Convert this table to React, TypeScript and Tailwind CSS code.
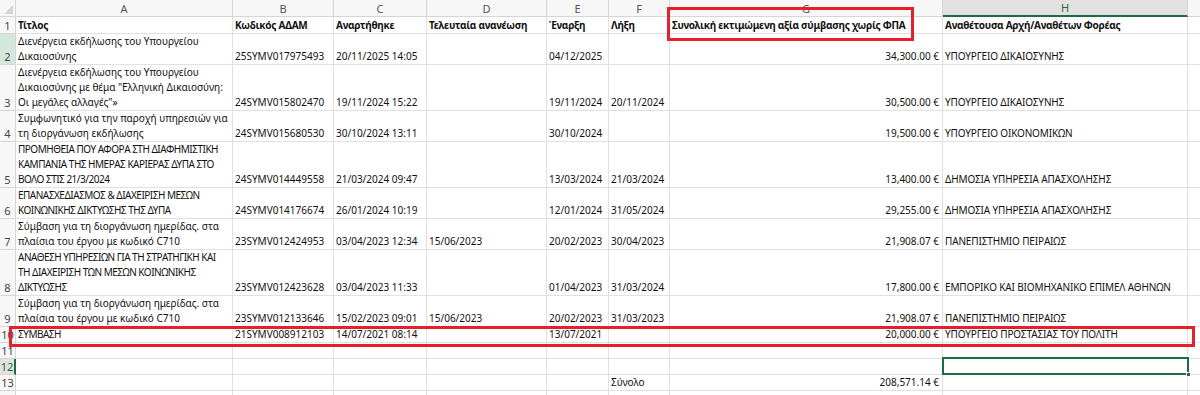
import React from "react";

type Row = {
  n: number;
  h: string;
  a?: string[];
  b?: string;
  c?: string;
  d?: string;
  e?: string;
  f?: string;
  g?: string;
  hh?: string;
  bold?: boolean;
};

const rows: Row[] = [
  { n: 1, h: "h-[17px]", a: ["Τίτλος"], b: "Κωδικός ΑΔΑΜ", c: "Αναρτήθηκε", d: "Τελευταία ανανέωση", e: "Έναρξη", f: "Λήξη", g: "Συνολική εκτιμώμενη αξία σύμβασης χωρίς ΦΠΑ", hh: "Αναθέτουσα Αρχή/Αναθέτων Φορέας", bold: true },
  { n: 2, h: "h-[31px]", a: ["Διενέργεια εκδήλωσης του Υπουργείου", "Δικαιοσύνης"], b: "25SYMV017975493", c: "20/11/2025 14:05", e: "04/12/2025", g: "34,300.00 €", hh: "ΥΠΟΥΡΓΕΙΟ ΔΙΚΑΙΟΣΥΝΗΣ" },
  { n: 3, h: "h-[46px]", a: ["Διενέργεια εκδήλωσης του Υπουργείου", "Δικαιοσύνης με θέμα \"Ελληνική Δικαιοσύνη:", "Οι μεγάλες αλλαγές\"»"], b: "24SYMV015802470", c: "19/11/2024 15:22", e: "19/11/2024", f: "20/11/2024", g: "30,500.00 €", hh: "ΥΠΟΥΡΓΕΙΟ ΔΙΚΑΙΟΣΥΝΗΣ" },
  { n: 4, h: "h-[31px]", a: ["Συμφωνητικό για την παροχή υπηρεσιών για", "τη διοργάνωση εκδήλωσης"], b: "24SYMV015680530", c: "30/10/2024 13:11", e: "30/10/2024", g: "19,500.00 €", hh: "ΥΠΟΥΡΓΕΙΟ ΟΙΚΟΝΟΜΙΚΩΝ" },
  { n: 5, h: "h-[46px]", a: ["ΠΡΟΜΗΘΕΙΑ ΠΟΥ ΑΦΟΡΑ ΣΤΗ ΔΙΑΦΗΜΙΣΤΙΚΗ", "ΚΑΜΠΑΝΙΑ ΤΗΣ ΗΜΕΡΑΣ ΚΑΡΙΕΡΑΣ ΔΥΠΑ ΣΤΟ", "ΒΟΛΟ ΣΤΙΣ 21/3/2024"], b: "24SYMV014449558", c: "21/03/2024 09:47", e: "13/03/2024", f: "21/03/2024", g: "13,400.00 €", hh: "ΔΗΜΟΣΙΑ ΥΠΗΡΕΣΙΑ ΑΠΑΣΧΟΛΗΣΗΣ" },
  { n: 6, h: "h-[31px]", a: ["ΕΠΑΝΑΣΧΕΔΙΑΣΜΟΣ & ΔΙΑΧΕΙΡΙΣΗ ΜΕΣΩΝ", "ΚΟΙΝΩΝΙΚΗΣ ΔΙΚΤΥΩΣΗΣ ΤΗΣ ΔΥΠΑ"], b: "24SYMV014176674", c: "26/01/2024 10:19", e: "12/01/2024", f: "31/05/2024", g: "29,255.00 €", hh: "ΔΗΜΟΣΙΑ ΥΠΗΡΕΣΙΑ ΑΠΑΣΧΟΛΗΣΗΣ" },
  { n: 7, h: "h-[31px]", a: ["Σύμβαση για τη διοργάνωση ημερίδας. στα", "πλαίσια του έργου με κωδικό C710"], b: "23SYMV012424953", c: "03/04/2023 12:34", d: "15/06/2023", e: "20/02/2023", f: "30/04/2023", g: "21,908.07 €", hh: "ΠΑΝΕΠΙΣΤΗΜΙΟ ΠΕΙΡΑΙΩΣ" },
  { n: 8, h: "h-[46px]", a: ["ΑΝΑΘΕΣΗ ΥΠΗΡΕΣΙΩΝ ΓΙΑ ΤΗ ΣΤΡΑΤΗΓΙΚΗ ΚΑΙ", "ΤΗ ΔΙΑΧΕΙΡΙΣΗ ΤΩΝ ΜΕΣΩΝ ΚΟΙΝΩΝΙΚΗΣ", "ΔΙΚΤΥΩΣΗΣ"], b: "23SYMV012423628", c: "03/04/2023 11:33", e: "01/04/2023", f: "31/03/2024", g: "17,800.00 €", hh: "ΕΜΠΟΡΙΚΟ ΚΑΙ ΒΙΟΜΗΧΑΝΙΚΟ ΕΠΙΜΕΛ ΑΘΗΝΩΝ" },
  { n: 9, h: "h-[31px]", a: ["Σύμβαση για τη διοργάνωση ημερίδας. στα", "πλαίσια του έργου με κωδικό C710"], b: "23SYMV012133646", c: "15/02/2023 09:01", d: "15/06/2023", e: "20/02/2023", f: "31/03/2023", g: "21,908.07 €", hh: "ΠΑΝΕΠΙΣΤΗΜΙΟ ΠΕΙΡΑΙΩΣ" },
  { n: 10, h: "h-[16px]", a: ["ΣΥΜΒΑΣΗ"], b: "21SYMV008912103", c: "14/07/2021 08:14", e: "13/07/2021", g: "20,000.00 €", hh: "ΥΠΟΥΡΓΕΙΟ ΠΡΟΣΤΑΣΙΑΣ ΤΟΥ ΠΟΛΙΤΗ" },
  { n: 11, h: "h-[16px]" },
  { n: 12, h: "h-[16px]" },
  { n: 13, h: "h-[16px]", f: "Σύνολο", g: "208,571.14 €" },
  { n: 14, h: "h-[16px]" },
];

const cell = "border-r border-b border-[#e1e1e1] flex flex-col justify-end pl-[2px] pr-[3px] overflow-hidden whitespace-nowrap leading-[15px]";

function Cell({ w, children, right, bold }: { w: string; children?: React.ReactNode; right?: boolean; bold?: boolean }) {
  return (
    <div className={`${cell} ${w} shrink-0 ${right ? "items-end" : "items-start"} ${bold ? "font-bold tracking-[-0.25px]" : ""}`}>
      {children}
    </div>
  );
}

const isUpper = (t: string) => t === t.toUpperCase() && /[Α-Ω]/.test(t);

export default function App() {
  return (
    <div className="relative w-[1200px] h-[395px] overflow-hidden bg-white text-[10px] text-[#111]" style={{ fontFamily: '"Noto Sans", "Liberation Sans", sans-serif' }}>
      {/* column headers */}
      <div className="flex h-[17px] bg-[#f7f7f7] text-[#555] text-[11px]">
        <div className="relative w-[16px] shrink-0 border-r border-b border-[#d6d6d6]">
          <div className="absolute right-[2px] bottom-[2px] w-0 h-0 border-l-[9px] border-l-transparent border-b-[9px] border-b-[#d4d4d4]" />
        </div>
        {[
          ["A", "w-[217px]"],
          ["B", "w-[101px]"],
          ["C", "w-[93px]"],
          ["D", "w-[120px]"],
          ["E", "w-[62px]"],
          ["F", "w-[61px]"],
          ["G", "w-[273px]"],
        ].map(([l, w]) => (
          <div key={l} className={`${w} shrink-0 border-r border-b border-[#d6d6d6] flex items-center justify-center leading-none`}>
            {l}
          </div>
        ))}
        <div className="w-[245px] shrink-0 border-r border-[#d6d6d6] border-b-2 border-b-[#1e6b3f] bg-[#e1e1e1] text-[#1e6b3f] flex items-center justify-center leading-none">
          H
        </div>
        <div className="flex-1 border-b border-[#d6d6d6]" />
      </div>

      {rows.map((r) => {
        const hdrBg = r.n === 2 ? "bg-[#d3e8da]" : r.n === 12 ? "bg-[#e1e1e1]" : "bg-[#f7f7f7]";
        const hdrTxt = r.n === 12 ? "text-[#1e6b3f] border-r-2 border-r-[#1e6b3f]" : "text-[#444] border-r border-[#d6d6d6]";
        return (
          <div key={r.n} className={`flex ${r.h}`}>
            <div className={`w-[16px] shrink-0 border-b border-b-[#d6d6d6] ${hdrBg} ${hdrTxt} flex items-end justify-center leading-[15px] text-[11px]`}>
              {r.n < 14 ? r.n : ""}
            </div>
            <Cell w="w-[217px]" bold={r.bold}>
              {r.a?.map((t, i) => (
                <span key={i} className={isUpper(t) ? "tracking-[-0.5px]" : ""}>
                  {t}
                </span>
              ))}
            </Cell>
            <Cell w="w-[101px]" bold={r.bold}>{r.b}</Cell>
            <Cell w="w-[93px]" bold={r.bold}>{r.c}</Cell>
            <Cell w="w-[120px]" bold={r.bold}>{r.d}</Cell>
            <Cell w="w-[62px]" bold={r.bold}>{r.e}</Cell>
            <Cell w="w-[61px]" bold={r.bold}>{r.f}</Cell>
            <Cell w="w-[273px]" bold={r.bold} right={!r.bold}>{r.g}</Cell>
            <Cell w="w-[245px]" bold={r.bold}>
              <span className={!r.bold ? "tracking-[-0.15px]" : ""}>{r.hh}</span>
            </Cell>
            <div className="flex-1 border-b border-[#e1e1e1]" />
          </div>
        );
      })}

      {/* selected cell H12 */}
      <div className="absolute left-[942px] top-[357px] w-[247px] h-[18px] border-2 border-[#1e6b3f]">
        <div className="absolute -right-[4px] -bottom-[4px] w-[5px] h-[5px] bg-[#1e6b3f] border border-white" />
      </div>

      {/* red highlight boxes */}
      <div className="absolute left-[667px] top-[7px] w-[247px] h-[34px] border-[3px] border-[#e3202b]" />
      <div className="absolute left-[9px] top-[326px] w-[1186px] h-[21px] border-[3px] border-[#e3202b]" />
    </div>
  );
}
